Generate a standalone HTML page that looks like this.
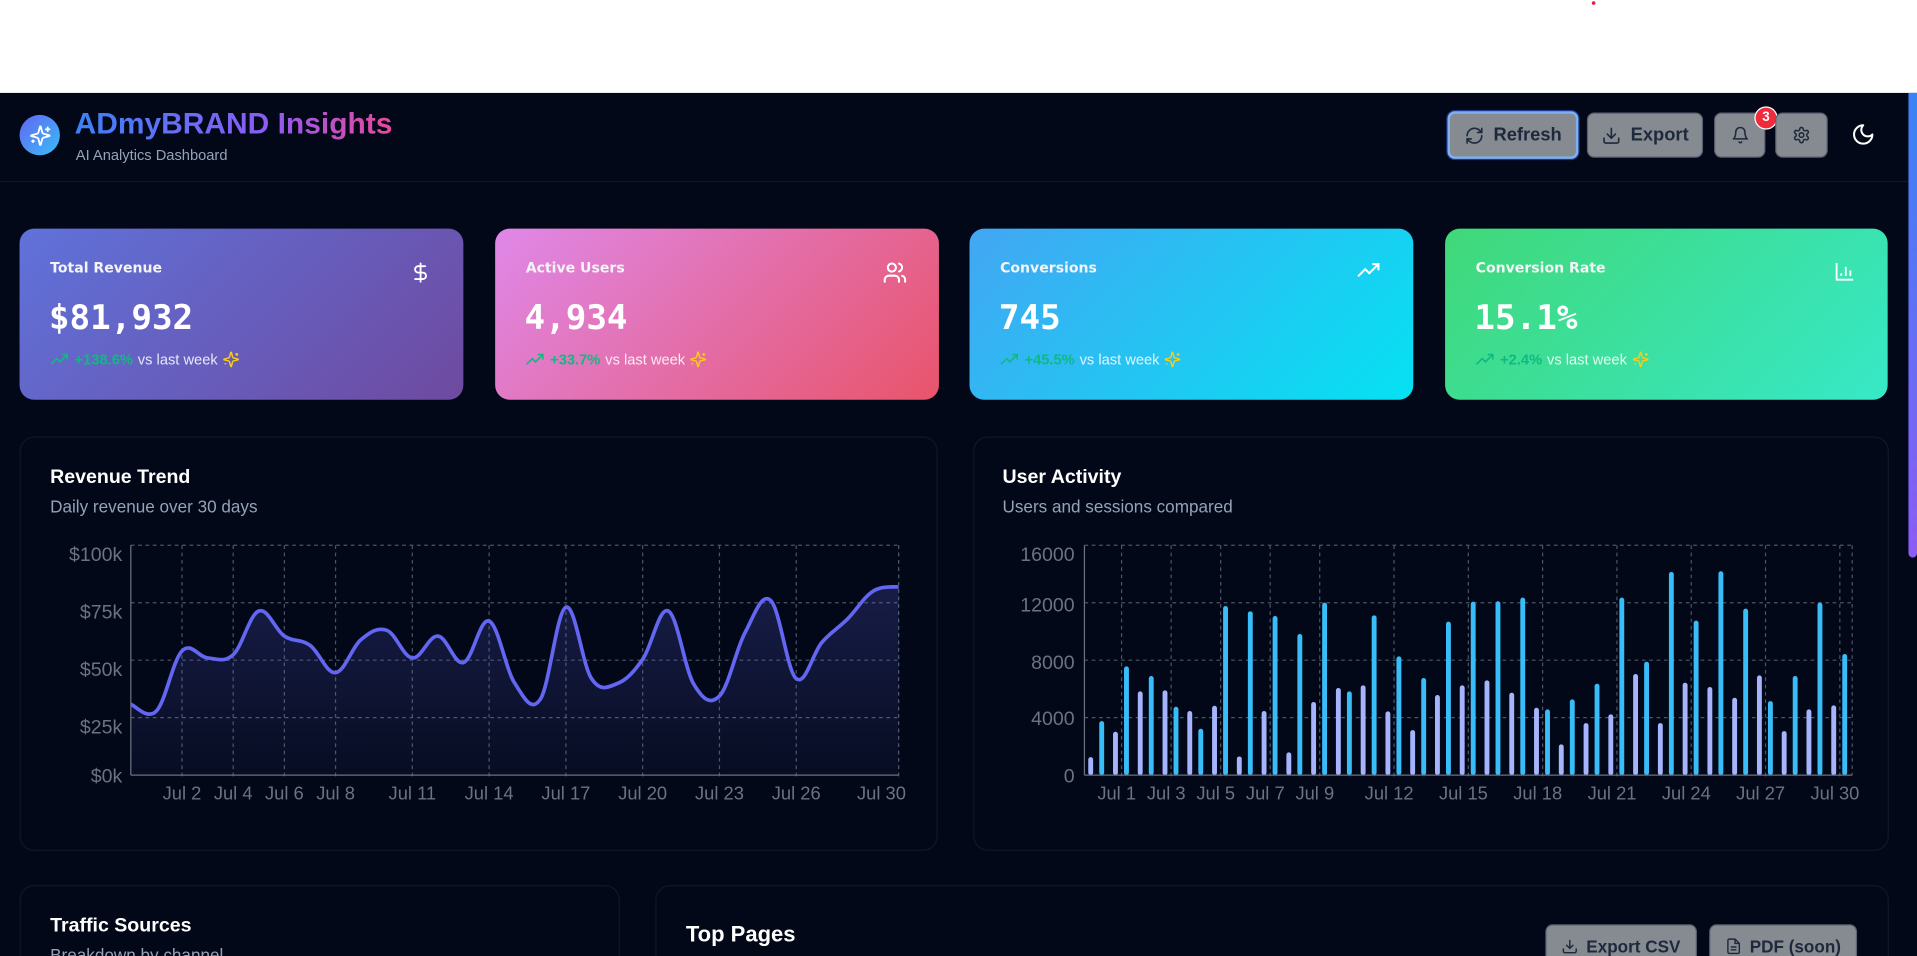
<!DOCTYPE html>
<html><head><meta charset="utf-8">
<style>
html,body{margin:0;padding:0;width:1917px;height:956px;overflow:hidden;background:#fff;}
#w{position:absolute;left:0;top:0;width:1568px;height:782px;overflow:hidden;transform:scale(1.22258);transform-origin:0 0;font-family:"Liberation Sans",sans-serif;}
.abs{position:absolute;}
#dark{position:absolute;left:0;top:76px;width:1568px;height:706px;background:#020817;}
.hdrline{position:absolute;left:0;top:148px;width:1561px;height:1px;background:#0f1729;}
.btn{position:absolute;background:#868a91;border-radius:6px;color:#1e293b;font-weight:bold;font-size:15px;display:flex;align-items:center;justify-content:center;gap:8px;box-sizing:border-box;border:1px solid #5b6170;}
.card{position:absolute;border-radius:12px;color:#fff;}
.card .lbl{position:absolute;left:25px;top:25px;font-family:"DejaVu Sans",sans-serif;font-weight:bold;font-size:11.5px;color:#f3f4f6;}
.card .val{position:absolute;left:24px;top:56px;font-family:"DejaVu Sans Mono",monospace;font-weight:bold;font-size:28px;}
.card .chg{position:absolute;left:25px;top:100px;font-size:12px;display:flex;align-items:center;gap:4px;color:rgba(255,255,255,.85);}
.card .chg b{color:#10b981;}
.card .ic{position:absolute;right:26px;top:26px;}
.panel{position:absolute;border:1px solid #0f1829;border-radius:12px;background:#020817;}
.pt{position:absolute;color:#fff;font-weight:bold;font-size:16px;}
.ps{position:absolute;color:#94a3b8;font-size:14px;}
svg text{font-family:"Liberation Sans",sans-serif;}
</style></head><body>
<div id="w">
<div class="abs" style="left:1302px;top:1px;width:3px;height:3px;border-radius:50%;background:#e11d48"></div>
<div id="dark"></div>
<div class="hdrline"></div>
<div class="abs" style="left:1561px;top:76px;width:7px;height:380px;border-radius:0 0 4px 4px;background:linear-gradient(#3b82f6,#8b5cf6)"></div>
<div class="abs" style="left:16px;top:94px;width:33px;height:33px;border-radius:50%;background:linear-gradient(135deg,#6366f1,#38bdf8);display:flex;align-items:center;justify-content:center">
<svg width="18" height="18" viewBox="0 0 24 24" fill="none" stroke="#fff" stroke-width="2" stroke-linecap="round" stroke-linejoin="round"><path d="M9.9 15.5A2 2 0 0 0 8.5 14.1L2.4 12.5a.5.5 0 0 1 0-1L8.5 9.9A2 2 0 0 0 9.9 8.5l1.6-6.1a.5.5 0 0 1 1 0l1.6 6.1a2 2 0 0 0 1.4 1.4l6.1 1.6a.5.5 0 0 1 0 1l-6.1 1.6a2 2 0 0 0-1.4 1.4l-1.6 6.1a.5.5 0 0 1-1 0z"/><path d="M20 3v4M22 5h-4M4 17v2M5 18H3"/></svg></div>
<div class="abs" style="left:61px;top:88px;font-size:24.5px;font-weight:bold;background:linear-gradient(90deg,#3b82f6,#8b5cf6 60%,#ec4899);-webkit-background-clip:text;background-clip:text;color:transparent;white-space:nowrap">ADmyBRAND Insights</div>
<div class="abs" style="left:62px;top:120px;font-size:12px;color:#94a3b8">AI Analytics Dashboard</div>
<div class="btn" style="left:1184px;top:91px;width:107px;height:39px;border:2px solid #7fb0f0;box-shadow:0 0 0 1px #1e3a8a">
<svg width="16" height="16" viewBox="0 0 24 24" fill="none" stroke="#1e293b" stroke-width="2" stroke-linecap="round" stroke-linejoin="round"><path d="M3 12a9 9 0 0 1 9-9 9.75 9.75 0 0 1 6.74 2.74L21 8"/><path d="M21 3v5h-5"/><path d="M21 12a9 9 0 0 1-9 9 9.75 9.75 0 0 1-6.74-2.74L3 16"/><path d="M8 16H3v5"/></svg>Refresh</div>
<div class="btn" style="left:1298px;top:92px;width:95px;height:37px">
<svg width="16" height="16" viewBox="0 0 24 24" fill="none" stroke="#1e293b" stroke-width="2" stroke-linecap="round" stroke-linejoin="round"><path d="M21 15v4a2 2 0 0 1-2 2H5a2 2 0 0 1-2-2v-4"/><path d="M7 10l5 5 5-5"/><path d="M12 15V3"/></svg>Export</div>
<div class="btn" style="left:1402px;top:92px;width:42px;height:37px">
<svg width="15" height="15" viewBox="0 0 24 24" fill="none" stroke="#1e293b" stroke-width="2" stroke-linecap="round" stroke-linejoin="round"><path d="M6 8a6 6 0 0 1 12 0c0 7 3 9 3 9H3s3-2 3-9"/><path d="M10.3 21a1.94 1.94 0 0 0 3.4 0"/></svg></div>
<div class="abs" style="left:1435px;top:87px;width:19px;height:19px;border-radius:50%;background:#ef2b3c;border:1px solid #fff;box-sizing:border-box;color:#fff;font-size:11px;font-weight:bold;text-align:center;line-height:17px">3</div>
<div class="btn" style="left:1452px;top:92px;width:43px;height:37px">
<svg width="15" height="15" viewBox="0 0 24 24" fill="none" stroke="#1e293b" stroke-width="2" stroke-linecap="round" stroke-linejoin="round"><path d="M12.22 2h-.44a2 2 0 0 0-2 2v.18a2 2 0 0 1-1 1.73l-.43.25a2 2 0 0 1-2 0l-.15-.08a2 2 0 0 0-2.730.73l-.22.38a2 2 0 0 0 .73 2.73l.15.1a2 2 0 0 1 1 1.72v.51a2 2 0 0 1-1 1.74l-.15.09a2 2 0 0 0-.73 2.73l.22.38a2 2 0 0 0 2.73.73l.15-.08a2 2 0 0 1 2 0l.43.25a2 2 0 0 1 1 1.73V20a2 2 0 0 0 2 2h.44a2 2 0 0 0 2-2v-.18a2 2 0 0 1 1-1.73l.43-.25a2 2 0 0 1 2 0l.15.08a2 2 0 0 0 2.73-.73l.22-.39a2 2 0 0 0-.73-2.73l-.15-.08a2 2 0 0 1-1-1.74v-.5a2 2 0 0 1 1-1.74l.15-.09a2 2 0 0 0 .73-2.73l-.22-.38a2 2 0 0 0-2.73-.73l-.15.08a2 2 0 0 1-2 0l-.43-.25a2 2 0 0 1-1-1.73V4a2 2 0 0 0-2-2z"/><circle cx="12" cy="12" r="3"/></svg></div>
<svg class="abs" style="left:1514px;top:100px" width="20" height="20" viewBox="0 0 24 24" fill="none" stroke="#fff" stroke-width="2" stroke-linecap="round" stroke-linejoin="round"><path d="M12 3a6 6 0 0 0 9 9 9 9 0 1 1-9-9Z"/></svg>

<div class="card" style="left:16px;top:187px;width:363px;height:140px;background:linear-gradient(135deg,#5f72da,#6e4aa0)">
<div class="lbl">Total Revenue</div>
<svg class="ic" width="18" height="20" viewBox="0 0 24 24" fill="none" stroke="#fff" stroke-width="2" stroke-linecap="round"><path d="M12 2v20"/><path d="M17 5H9.5a3.5 3.5 0 0 0 0 7h5a3.5 3.5 0 0 1 0 7H6"/></svg>
<div class="val">$81,932</div>
<div class="chg"><svg width="16" height="12" viewBox="0 0 24 16" fill="none" stroke="#10b981" stroke-width="2"><path d="M1 14l7-7 4 4 9-9M15 2h6v6"/></svg><b>+138.6%</b> vs last week <svg class="sp" width="14" height="14" viewBox="0 0 24 24" fill="none" stroke="#facc15" stroke-width="2" stroke-linejoin="round"><path d="M9.9 15.5A2 2 0 0 0 8.5 14.1L2.4 12.5a.5.5 0 0 1 0-1L8.5 9.9A2 2 0 0 0 9.9 8.5l1.6-6.1a.5.5 0 0 1 1 0l1.6 6.1a2 2 0 0 0 1.4 1.4l6.1 1.6a.5.5 0 0 1 0 1l-6.1 1.6a2 2 0 0 0-1.4 1.4l-1.6 6.1a.5.5 0 0 1-1 0z"/><path d="M20 3v4M22 5h-4M4 17v2M5 18H3"/></svg></div>
</div>
<div class="card" style="left:405px;top:187px;width:363px;height:140px;background:linear-gradient(135deg,#df88e9,#e8546a)">
<div class="lbl">Active Users</div>
<svg class="ic" width="20" height="20" viewBox="0 0 24 24" fill="none" stroke="#fff" stroke-width="2" stroke-linecap="round"><path d="M16 21v-2a4 4 0 0 0-4-4H6a4 4 0 0 0-4 4v2"/><circle cx="9" cy="7" r="4"/><path d="M22 21v-2a4 4 0 0 0-3-3.87M16 3.13a4 4 0 0 1 0 7.75"/></svg>
<div class="val">4,934</div>
<div class="chg"><svg width="16" height="12" viewBox="0 0 24 16" fill="none" stroke="#10b981" stroke-width="2"><path d="M1 14l7-7 4 4 9-9M15 2h6v6"/></svg><b>+33.7%</b> vs last week <svg width="14" height="14" viewBox="0 0 24 24" fill="none" stroke="#facc15" stroke-width="2" stroke-linejoin="round"><path d="M9.9 15.5A2 2 0 0 0 8.5 14.1L2.4 12.5a.5.5 0 0 1 0-1L8.5 9.9A2 2 0 0 0 9.9 8.5l1.6-6.1a.5.5 0 0 1 1 0l1.6 6.1a2 2 0 0 0 1.4 1.4l6.1 1.6a.5.5 0 0 1 0 1l-6.1 1.6a2 2 0 0 0-1.4 1.4l-1.6 6.1a.5.5 0 0 1-1 0z"/><path d="M20 3v4M22 5h-4M4 17v2M5 18H3"/></svg></div>
</div>
<div class="card" style="left:793px;top:187px;width:363px;height:140px;background:linear-gradient(135deg,#43a6f3,#05e2f2)">
<div class="lbl">Conversions</div>
<svg class="ic" width="20" height="16" viewBox="0 0 24 16" fill="none" stroke="#fff" stroke-width="2"><path d="M1 14l7-7 4 4 9-9M15 2h6v6"/></svg>
<div class="val">745</div>
<div class="chg"><svg width="16" height="12" viewBox="0 0 24 16" fill="none" stroke="#10b981" stroke-width="2"><path d="M1 14l7-7 4 4 9-9M15 2h6v6"/></svg><b>+45.5%</b> vs last week <svg width="14" height="14" viewBox="0 0 24 24" fill="none" stroke="#facc15" stroke-width="2" stroke-linejoin="round"><path d="M9.9 15.5A2 2 0 0 0 8.5 14.1L2.4 12.5a.5.5 0 0 1 0-1L8.5 9.9A2 2 0 0 0 9.9 8.5l1.6-6.1a.5.5 0 0 1 1 0l1.6 6.1a2 2 0 0 0 1.4 1.4l6.1 1.6a.5.5 0 0 1 0 1l-6.1 1.6a2 2 0 0 0-1.4 1.4l-1.6 6.1a.5.5 0 0 1-1 0z"/><path d="M20 3v4M22 5h-4M4 17v2M5 18H3"/></svg></div>
</div>
<div class="card" style="left:1182px;top:187px;width:362px;height:140px;background:linear-gradient(135deg,#40d878,#37e8c8)">
<div class="lbl">Conversion Rate</div>
<svg class="ic" width="18" height="18" viewBox="0 0 24 24" fill="none" stroke="#fff" stroke-width="2"><path d="M3 3v18h18M8 17v-3M13 17V7M18 17v-6"/></svg>
<div class="val">15.1%</div>
<div class="chg"><svg width="16" height="12" viewBox="0 0 24 16" fill="none" stroke="#10b981" stroke-width="2"><path d="M1 14l7-7 4 4 9-9M15 2h6v6"/></svg><b>+2.4%</b> vs last week <svg width="14" height="14" viewBox="0 0 24 24" fill="none" stroke="#facc15" stroke-width="2" stroke-linejoin="round"><path d="M9.9 15.5A2 2 0 0 0 8.5 14.1L2.4 12.5a.5.5 0 0 1 0-1L8.5 9.9A2 2 0 0 0 9.9 8.5l1.6-6.1a.5.5 0 0 1 1 0l1.6 6.1a2 2 0 0 0 1.4 1.4l6.1 1.6a.5.5 0 0 1 0 1l-6.1 1.6a2 2 0 0 0-1.4 1.4l-1.6 6.1a.5.5 0 0 1-1 0z"/><path d="M20 3v4M22 5h-4M4 17v2M5 18H3"/></svg></div>
</div>

<div class="panel" style="left:16px;top:357px;width:749px;height:337px"></div>
<div class="pt" style="left:41px;top:382px">Revenue Trend</div>
<div class="ps" style="left:41px;top:406px">Daily revenue over 30 days</div>
<div class="panel" style="left:796px;top:357px;width:747px;height:337px"></div>
<div class="pt" style="left:820px;top:382px">User Activity</div>
<div class="ps" style="left:820px;top:406px">Users and sessions compared</div>

<svg class="abs" style="left:0;top:0" width="1568" height="782">
<defs><linearGradient id="fg" x1="0" y1="0" x2="0" y2="1"><stop offset="0" stop-color="#6366f1" stop-opacity=".22"/><stop offset="1" stop-color="#6366f1" stop-opacity=".05"/></linearGradient></defs>
<g id="revgrid" stroke="#4b5563" stroke-dasharray="3 3" stroke-width="1"></g>
<path id="revfill" fill="url(#fg)"/>
<path id="revline" fill="none" stroke="#6366f1" stroke-width="3"/>
<g stroke="#6b7280"><line x1="107" y1="446" x2="107" y2="634"/><line x1="107" y1="634" x2="735" y2="634"/></g>
<g fill="#6b7280" font-size="16" text-anchor="end">
<text x="100" y="459">$100k</text><text x="100" y="506">$75k</text><text x="100" y="553">$50k</text><text x="100" y="600">$25k</text><text x="100" y="640">$0k</text></g>
<g id="revx" fill="#6b7280" font-size="15" text-anchor="middle"></g>
<g id="bargrid" stroke="#4b5563" stroke-dasharray="3 3" stroke-width="1"></g>
<g id="bars"></g>
<g stroke="#6b7280"><line x1="887" y1="446" x2="887" y2="634"/><line x1="887" y1="634" x2="1515" y2="634"/></g>
<g fill="#6b7280" font-size="16" text-anchor="end">
<text x="879" y="459">16000</text><text x="879" y="500">12000</text><text x="879" y="547">8000</text><text x="879" y="593">4000</text><text x="879" y="640">0</text></g>
<g id="barx" fill="#6b7280" font-size="15" text-anchor="middle"></g>
</svg>

<div class="panel" style="left:16px;top:724px;width:489px;height:80px"></div>
<div class="pt" style="left:41px;top:749px">Traffic Sources</div>
<div class="ps" style="left:41px;top:773px">Breakdown by channel</div>
<div class="panel" style="left:536px;top:724px;width:1007px;height:80px"></div>
<div class="pt" style="left:561px;top:754px;font-size:18px">Top Pages</div>
<div class="btn" style="left:1264px;top:756px;width:124px;height:36px;font-size:14px;gap:6px"><svg width="14" height="14" viewBox="0 0 24 24" fill="none" stroke="#1e293b" stroke-width="2"><path d="M21 15v4a2 2 0 0 1-2 2H5a2 2 0 0 1-2-2v-4M7 10l5 5 5-5M12 15V3"/></svg>Export CSV</div>
<div class="btn" style="left:1398px;top:756px;width:121px;height:36px;font-size:14px;gap:6px"><svg width="14" height="14" viewBox="0 0 24 24" fill="none" stroke="#1e293b" stroke-width="2"><path d="M14 2H6a2 2 0 0 0-2 2v16a2 2 0 0 0 2 2h12a2 2 0 0 0 2-2V8z"/><path d="M14 2v6h6M16 13H8M16 17H8"/></svg>PDF (soon)</div>
</div>
<script>
var NS="http://www.w3.org/2000/svg";
function el(t,a,p){var e=document.createElementNS(NS,t);for(var k in a)e.setAttribute(k,a[k]);p.appendChild(e);return e;}
var rv=[30.8,27.9,54,51,52.4,71.4,60.5,56.5,44.6,59,63,51,60.5,49,67,40,33,73,42,39.8,50.4,71.4,39.5,34.4,62,76,42,57.7,67.9,80,82];
var x0=107,dx=(735-107)/30,yb=634,ys=188/100;
var pts=rv.map(function(v,i){return [x0+i*dx,yb-v*ys];});
function smooth(p){var d="M"+p[0][0]+","+p[0][1];for(var i=0;i<p.length-1;i++){var a=p[i-1]||p[i],b=p[i],c=p[i+1],e=p[i+2]||c;var t=0.18;
var c1=[b[0]+(c[0]-a[0])*t,b[1]+(c[1]-a[1])*t],c2=[c[0]-(e[0]-b[0])*t,c[1]-(e[1]-b[1])*t];d+="C"+c1+" "+c2+" "+c;}return d;}
var lp=smooth(pts);
document.getElementById("revline").setAttribute("d",lp);
document.getElementById("revfill").setAttribute("d",lp+"L735,634L107,634Z");
var rg=document.getElementById("revgrid");
[446,493,540,587].forEach(function(y){el("line",{x1:107,y1:y,x2:735,y2:y},rg);});
var rt=[2,4,6,8,11,14,17,20,23,26,30],rx=document.getElementById("revx");
rt.forEach(function(d){var x=x0+d*dx;el("line",{x1:x,y1:446,x2:x,y2:638},rg);var t=el("text",{x:(d==30?x-14:x),y:654},rx);t.textContent="Jul "+d;});
el("line",{x1:735,y1:446,x2:735,y2:634},rg);
var bv=[[1254,3762],[3019,7570],[5829,6897],[5898,4760],[4459,3228],[4830,11773],[1300,11402],[4459,11077],[1579,9823],[5086,12006],[6061,5829],[6247,11123],[4435,8267],[3135,6758],[5573,10682],[6247,12075],[6595,12099],[5736,12354],[4691,4575],[2136,5271],[3623,6363],[4226,12354],[7036,7895],[3623,14142],[6432,10752],[6130,14188],[5387,11588],[6943,5155],[3065,6897],[4575,12006],[4853,8430]];
var bx0=887,bw=(1515-887)/31,bs=188/16000;
var bg=document.getElementById("bargrid"),bb=document.getElementById("bars"),bxg=document.getElementById("barx");
[446,493,540,587].forEach(function(y){el("line",{x1:887,y1:y,x2:1515,y2:y},bg);});
el("line",{x1:1515,y1:446,x2:1515,y2:634},bg);
bv.forEach(function(v,i){var c=bx0+bw*(i+0.5);
el("rect",{x:c-7,y:634-v[0]*bs,width:4,height:v[0]*bs,rx:2,fill:"#a5b4fc"},bb);
el("rect",{x:c+2,y:634-v[1]*bs,width:4,height:v[1]*bs,rx:2,fill:"#38bdf8"},bb);});
[1,3,5,7,9,12,15,18,21,24,27,30].forEach(function(d){var x=bx0+bw*(d+0.5);el("line",{x1:x,y1:446,x2:x,y2:638},bg);var t=el("text",{x:x-4,y:654},bxg);t.textContent="Jul "+d;});
</script>
</body></html>
